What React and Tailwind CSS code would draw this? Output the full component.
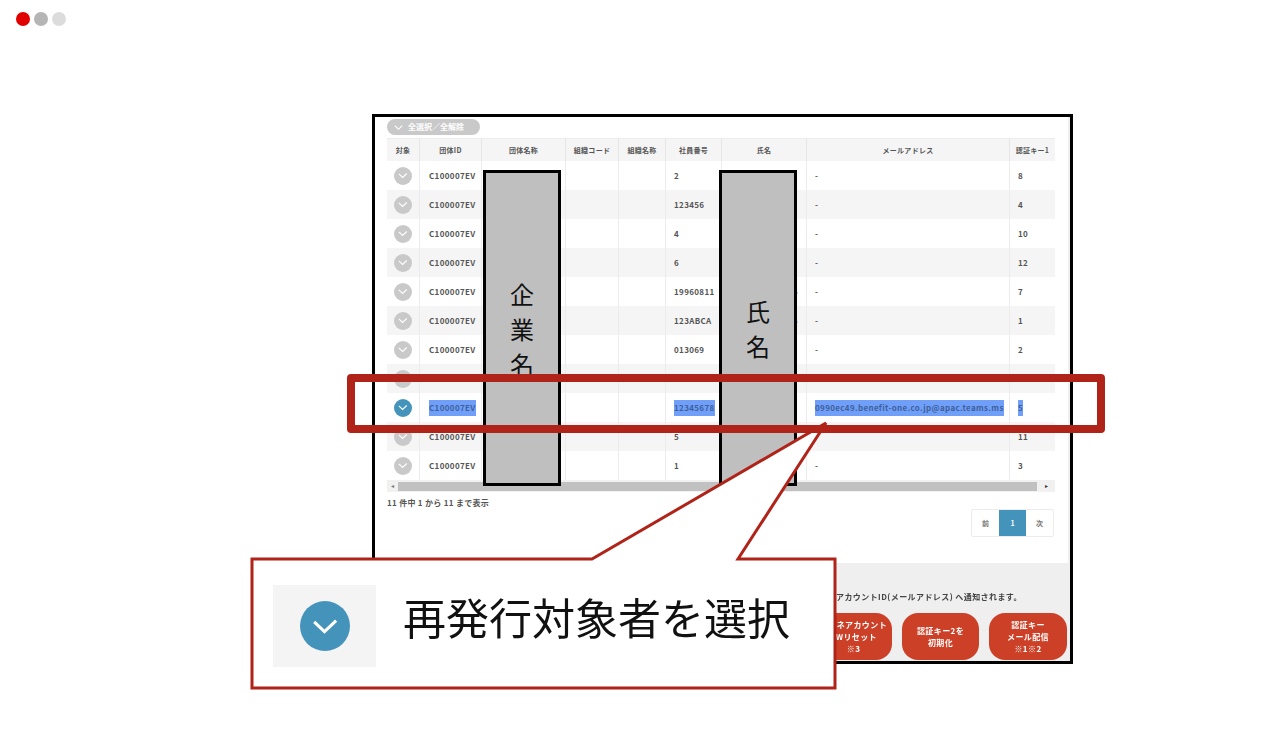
const font = { fontFamily: '"Noto Sans CJK JP", "Noto Sans", sans-serif' };

const columns = "grid grid-cols-[33px_62px_84px_53px_47px_56px_85px_203px_45px]";

const headers = ["対象", "団体ID", "団体名称", "組織コード", "組織名称", "社員番号", "氏名", "メールアドレス", "認証キー1"];

const rows = [
  { no: "2", mail: "-", key: "8" },
  { no: "123456", mail: "-", key: "4" },
  { no: "4", mail: "-", key: "10" },
  { no: "6", mail: "-", key: "12" },
  { no: "19960811", mail: "-", key: "7", name: "ル" },
  { no: "123ABCA", mail: "-", key: "1", name: "ル" },
  { no: "013069", mail: "-", key: "2" },
  { no: "7", mail: "-", key: "9" },
  { no: "12345678", mail: "0990ec49.benefit-one.co.jp@apac.teams.ms", key: "5", selected: true },
  { no: "5", mail: "-", key: "11" },
  { no: "1", mail: "-", key: "3" },
];

const Check = ({ size, on }) => (
  <span
    className={`flex items-center justify-center rounded-full ${on ? "bg-[#4493bb]" : "bg-[#c9c9c9]"}`}
    style={{ width: size, height: size }}
  >
    <svg viewBox="0 0 24 24" width={size * 0.62} height={size * 0.62} fill="none" stroke="white" strokeWidth="2.4">
      <path d="M4 8.5 L12 16 L21 7.5" />
    </svg>
  </span>
);

const Mark = ({ on, children }) =>
  on ? <span className="bg-[#6f9ff8] py-[2px] text-[#3f5f9c]">{children}</span> : children;

const Row = ({ row, index }) => (
  <div className={`${columns} h-[29px] items-stretch text-[8px] font-bold tracking-[0.35px] text-[#555] ${index % 2 ? "bg-[#f5f5f5]" : "bg-white"}`}>
    <div className="flex items-center justify-center border-r border-[#ececec]">
      <Check size={18} on={row.selected} />
    </div>
    <div className="flex items-center whitespace-nowrap border-r border-[#ececec] pl-[9px]">
      <Mark on={row.selected}>C100007EV</Mark>
    </div>
    <div className="border-r border-[#ececec]" />
    <div className="border-r border-[#ececec]" />
    <div className="border-r border-[#ececec]" />
    <div className="flex items-center border-r border-[#ececec] pl-[8px]">
      <Mark on={row.selected}>{row.no}</Mark>
    </div>
    <div className="flex items-center justify-end border-r border-[#ececec] pr-[8px]">{row.name}</div>
    <div className="flex items-center whitespace-nowrap border-r border-[#ececec] pl-[8px]">
      <Mark on={row.selected}>{row.mail}</Mark>
    </div>
    <div className="flex items-center pl-[8px]">
      <Mark on={row.selected}>{row.key}</Mark>
    </div>
  </div>
);

const Table = () => (
  <div className="mt-[3px] w-[668px]">
    <div className={`${columns} h-[23px] border-t border-[#ececec] bg-[#f5f5f5] text-[7px] font-bold tracking-[0.3px] text-[#555]`}>
      {headers.map((h, i) => (
        <div key={h} className={`flex items-center justify-center whitespace-nowrap ${i < 8 ? "border-r border-[#e6e6e6]" : ""}`}>
          {h}
        </div>
      ))}
    </div>
    {rows.map((row, i) => (
      <Row key={row.no} row={row} index={i} />
    ))}
    <div className="flex h-[12px] items-center bg-[#f1f1f1]">
      <span className="flex w-[11px] justify-center text-[6px] leading-none text-[#777]">◂</span>
      <div className="h-[9px] w-[639px] bg-[#c1c1c1]" />
      <span className="flex flex-1 justify-center text-[6px] leading-none text-[#333]">▸</span>
    </div>
  </div>
);

const Pagination = () => (
  <div className="mr-[1px] flex h-[28px] self-end overflow-hidden rounded-[2px] border border-[#ececec] text-[7px] font-bold">
    <span className="flex w-[27px] items-center justify-center text-[#777]">前</span>
    <span className="flex w-[27px] items-center justify-center bg-[#4493bb] text-white">1</span>
    <span className="flex w-[27px] items-center justify-center text-[#777]">次</span>
  </div>
);

const RedButton = ({ lines, width }) => (
  <div className={`flex h-[47px] flex-col items-center justify-center rounded-[16px] bg-[#cc4028] text-[8px] font-bold leading-[12px] tracking-[0.4px] text-white ${width}`}>
    {lines.map((l) => (
      <span key={l} className="whitespace-nowrap">{l}</span>
    ))}
  </div>
);

const Frame = () => (
  <div className="ml-[372px] mt-[88px] h-[550px] w-[701px] border-[3px] border-black bg-[#efefef]">
    <div className="flex h-full flex-col blur-[0.4px]">
      <div className="flex h-[446px] w-[693px] flex-col bg-white pl-[12px] pt-[2px]">
        <div className="flex h-[16px] w-[93px] items-center gap-[4px] rounded-full bg-[#c9c9c9] pl-[6px] text-[8px] font-bold text-white">
          <svg viewBox="0 0 24 24" width="11" height="11" fill="none" stroke="white" strokeWidth="2.4">
            <path d="M4 8 L12 16 L20 8" />
          </svg>
          全選択／全解除
        </div>
        <Table />
        <div className="mt-[5px] flex w-[668px] flex-col">
          <div className="text-[8px] font-bold leading-[12px] tracking-[0.3px] text-[#555]">11 件中 1 から 11 まで表示</div>
          <Pagination />
        </div>
      </div>
      <div className="mt-[28px] pl-[461px] text-[8px] font-bold leading-[12px] tracking-[0.42px] text-[#444]">
        アカウントID(メールアドレス) へ通知されます。
      </div>
      <div className="mt-[10px] flex justify-end gap-[10px] pr-[3px]">
        <RedButton width="w-[77px]" lines={["チャネアカウント", "PWリセット", "※3"]} />
        <RedButton width="w-[77px]" lines={["認証キー2を", "初期化"]} />
        <RedButton width="w-[78px]" lines={["認証キー", "メール配信", "※1※2"]} />
      </div>
    </div>
  </div>
);

// 黒枠のマスク（企業名・氏名）
const Mask = ({ chars, className }) => (
  <div className={`absolute top-[170px] flex h-[316px] w-[78px] flex-col items-center justify-center border-[3px] border-black bg-[#bfbfbf] text-[24px] leading-[35px] text-[#111] ${className}`}>
    {chars.map((c) => (
      <span key={c}>{c}</span>
    ))}
  </div>
);

const Callout = () => (
  <>
    <svg className="absolute left-0 top-0" width="1280" height="740" fill="none">
      <path
        d="M252 559 H592 L826 423 L738 559 H835 V688 H252 Z"
        fill="white"
        stroke="#b02318"
        strokeWidth="3"
      />
    </svg>
    <div className="absolute left-[273px] top-[585px] flex h-[82px] w-[103px] items-center justify-center bg-[#f4f4f4]">
      <Check size={50} on />
    </div>
    <div className="absolute left-[403px] top-[585px] whitespace-nowrap text-[43px] leading-[62px] text-[#111]">
      再発行対象者を選択
    </div>
  </>
);

export default function App() {
  return (
    <div className="relative h-[740px] w-[1280px] overflow-hidden bg-white" style={font}>
      <div className="flex gap-1 pl-4 pt-3">
        <span className="h-[14px] w-[14px] rounded-full bg-[#e00000]" />
        <span className="h-[14px] w-[14px] rounded-full bg-[#b5b5b5]" />
        <span className="h-[14px] w-[14px] rounded-full bg-[#dcdcdc]" />
      </div>
      <Frame />
      <Mask chars={["企", "業", "名"]} className="left-[483px]" />
      <Mask chars={["氏", "名"]} className="left-[719px]" />
      <Callout />
      <div className="absolute left-[347px] top-[374px] h-[59px] w-[758px] rounded-[4px] border-[8px] border-[#b02318]" />
    </div>
  );
}
